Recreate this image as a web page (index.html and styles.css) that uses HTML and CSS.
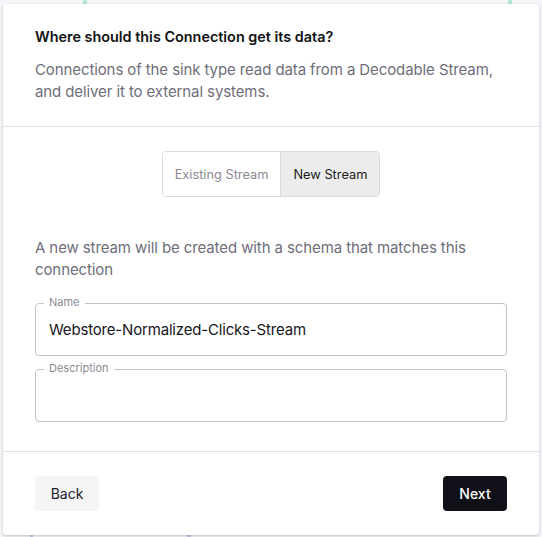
FILE: index.html
```html
<!DOCTYPE html>
<html>
<head>
<meta charset="utf-8">
<link rel="stylesheet" href="styles.css">
</head>
<body>
<div class="card">
  <div class="header">
    <h2 class="title">Where should this Connection get its data?</h2>
    <p class="subtitle">Connections of the sink type read data from a Decodable Stream, and deliver it to external systems.</p>
  </div>
  <div class="body">
    <div class="toggle-row">
      <div class="toggle">
        <button class="tog">Existing Stream</button>
        <button class="tog active">New Stream</button>
      </div>
    </div>
    <p class="info">A new stream will be created with a schema that matches this connection</p>
    <div class="field">
      <span class="label">Name</span>
      <div class="value">Webstore-Normalized-Clicks-Stream</div>
    </div>
    <div class="field desc">
      <span class="label">Description</span>
      <div class="value"></div>
    </div>
  </div>
  <div class="footer">
    <button class="btn back">Back</button>
    <button class="btn next">Next</button>
  </div>
</div>
</body>
</html>
```
FILE: styles.css
```css
html, body {
  margin: 0;
  padding: 0;
}
body {
  width: 542px;
  height: 537px;
  overflow: hidden;
  font-family: Inter, "Noto Sans", sans-serif;
  background-color: #f4f5f8;
  background-image:
    linear-gradient(#b3e8d4, #b3e8d4),
    linear-gradient(#b3e8d4, #b3e8d4),
    linear-gradient(#c3c9ea, #c3c9ea),
    linear-gradient(#c3c9ea, #c3c9ea);
  background-size: 4px 4px, 4px 4px, 3px 2px, 4px 2px;
  background-position: 83px 0, 508px 0, 30px 535px, 187px 535px;
  background-repeat: no-repeat;
  padding-top: 4px;
  box-sizing: border-box;
}
.card {
  margin: 0 3px;
  width: 536px;
  height: 531px;
  background: #fff;
  border-radius: 4px;
  box-shadow: 0 1px 3px rgba(0, 0, 0, 0.22);
  display: flex;
  flex-direction: column;
  box-sizing: border-box;
}
.header {
  padding: 23px 32px 23px;
  border-bottom: 1px solid #e2e2e4;
}
.title {
  margin: 0;
  font-size: 14.4px;
  line-height: 20px;
  font-weight: 600;
  color: #111114;
}
.subtitle {
  margin: 12px 0 0;
  font-size: 15px;
  line-height: 22px;
  letter-spacing: -0.1px;
  color: #6e6e7a;
}
.body {
  padding: 24px 32px 29px;
  border-bottom: 1px solid #e2e2e4;
}
.toggle-row {
  display: flex;
  justify-content: center;
}
.toggle {
  display: flex;
  border: 1px solid #dcdcde;
  border-radius: 4px;
  overflow: hidden;
  height: 46px;
  box-sizing: border-box;
}
.tog {
  font-family: inherit;
  font-size: 12.8px;
  border: 0;
  background: #fff;
  color: #8a8a92;
  padding: 0 12px;
  margin: 0;
  cursor: pointer;
}
.tog + .tog {
  border-left: 1px solid #dcdcde;
}
.tog.active {
  background: #ececec;
  color: #1a1a24;
}
.info {
  margin: 40px 0 0;
  font-size: 15px;
  line-height: 22px;
  letter-spacing: -0.1px;
  color: #6e6e7a;
}
.field {
  position: relative;
  margin-top: 22px;
  height: 53px;
  border: 1px solid #c4c4c6;
  border-radius: 4px;
  box-sizing: border-box;
}
.field.desc {
  margin-top: 13px;
}
.label {
  position: absolute;
  top: -8px;
  left: 8px;
  padding: 0 5px;
  background: #fff;
  font-size: 11px;
  line-height: 13px;
  color: #8a8a92;
}
.value {
  padding: 0 13px;
  font-size: 15px;
  line-height: 51px;
  letter-spacing: -0.18px;
  color: #16161c;
}
.footer {
  padding: 24px 32px;
  display: flex;
  justify-content: space-between;
}
.btn {
  font-family: inherit;
  font-size: 14px;
  width: 64px;
  height: 35px;
  border: 0;
  border-radius: 4px;
  margin: 0;
  padding: 0;
  cursor: pointer;
}
.back {
  background: #f5f5f5;
  color: #22222c;
}
.next {
  background: #101018;
  color: #fff;
  font-weight: 500;
}
```
